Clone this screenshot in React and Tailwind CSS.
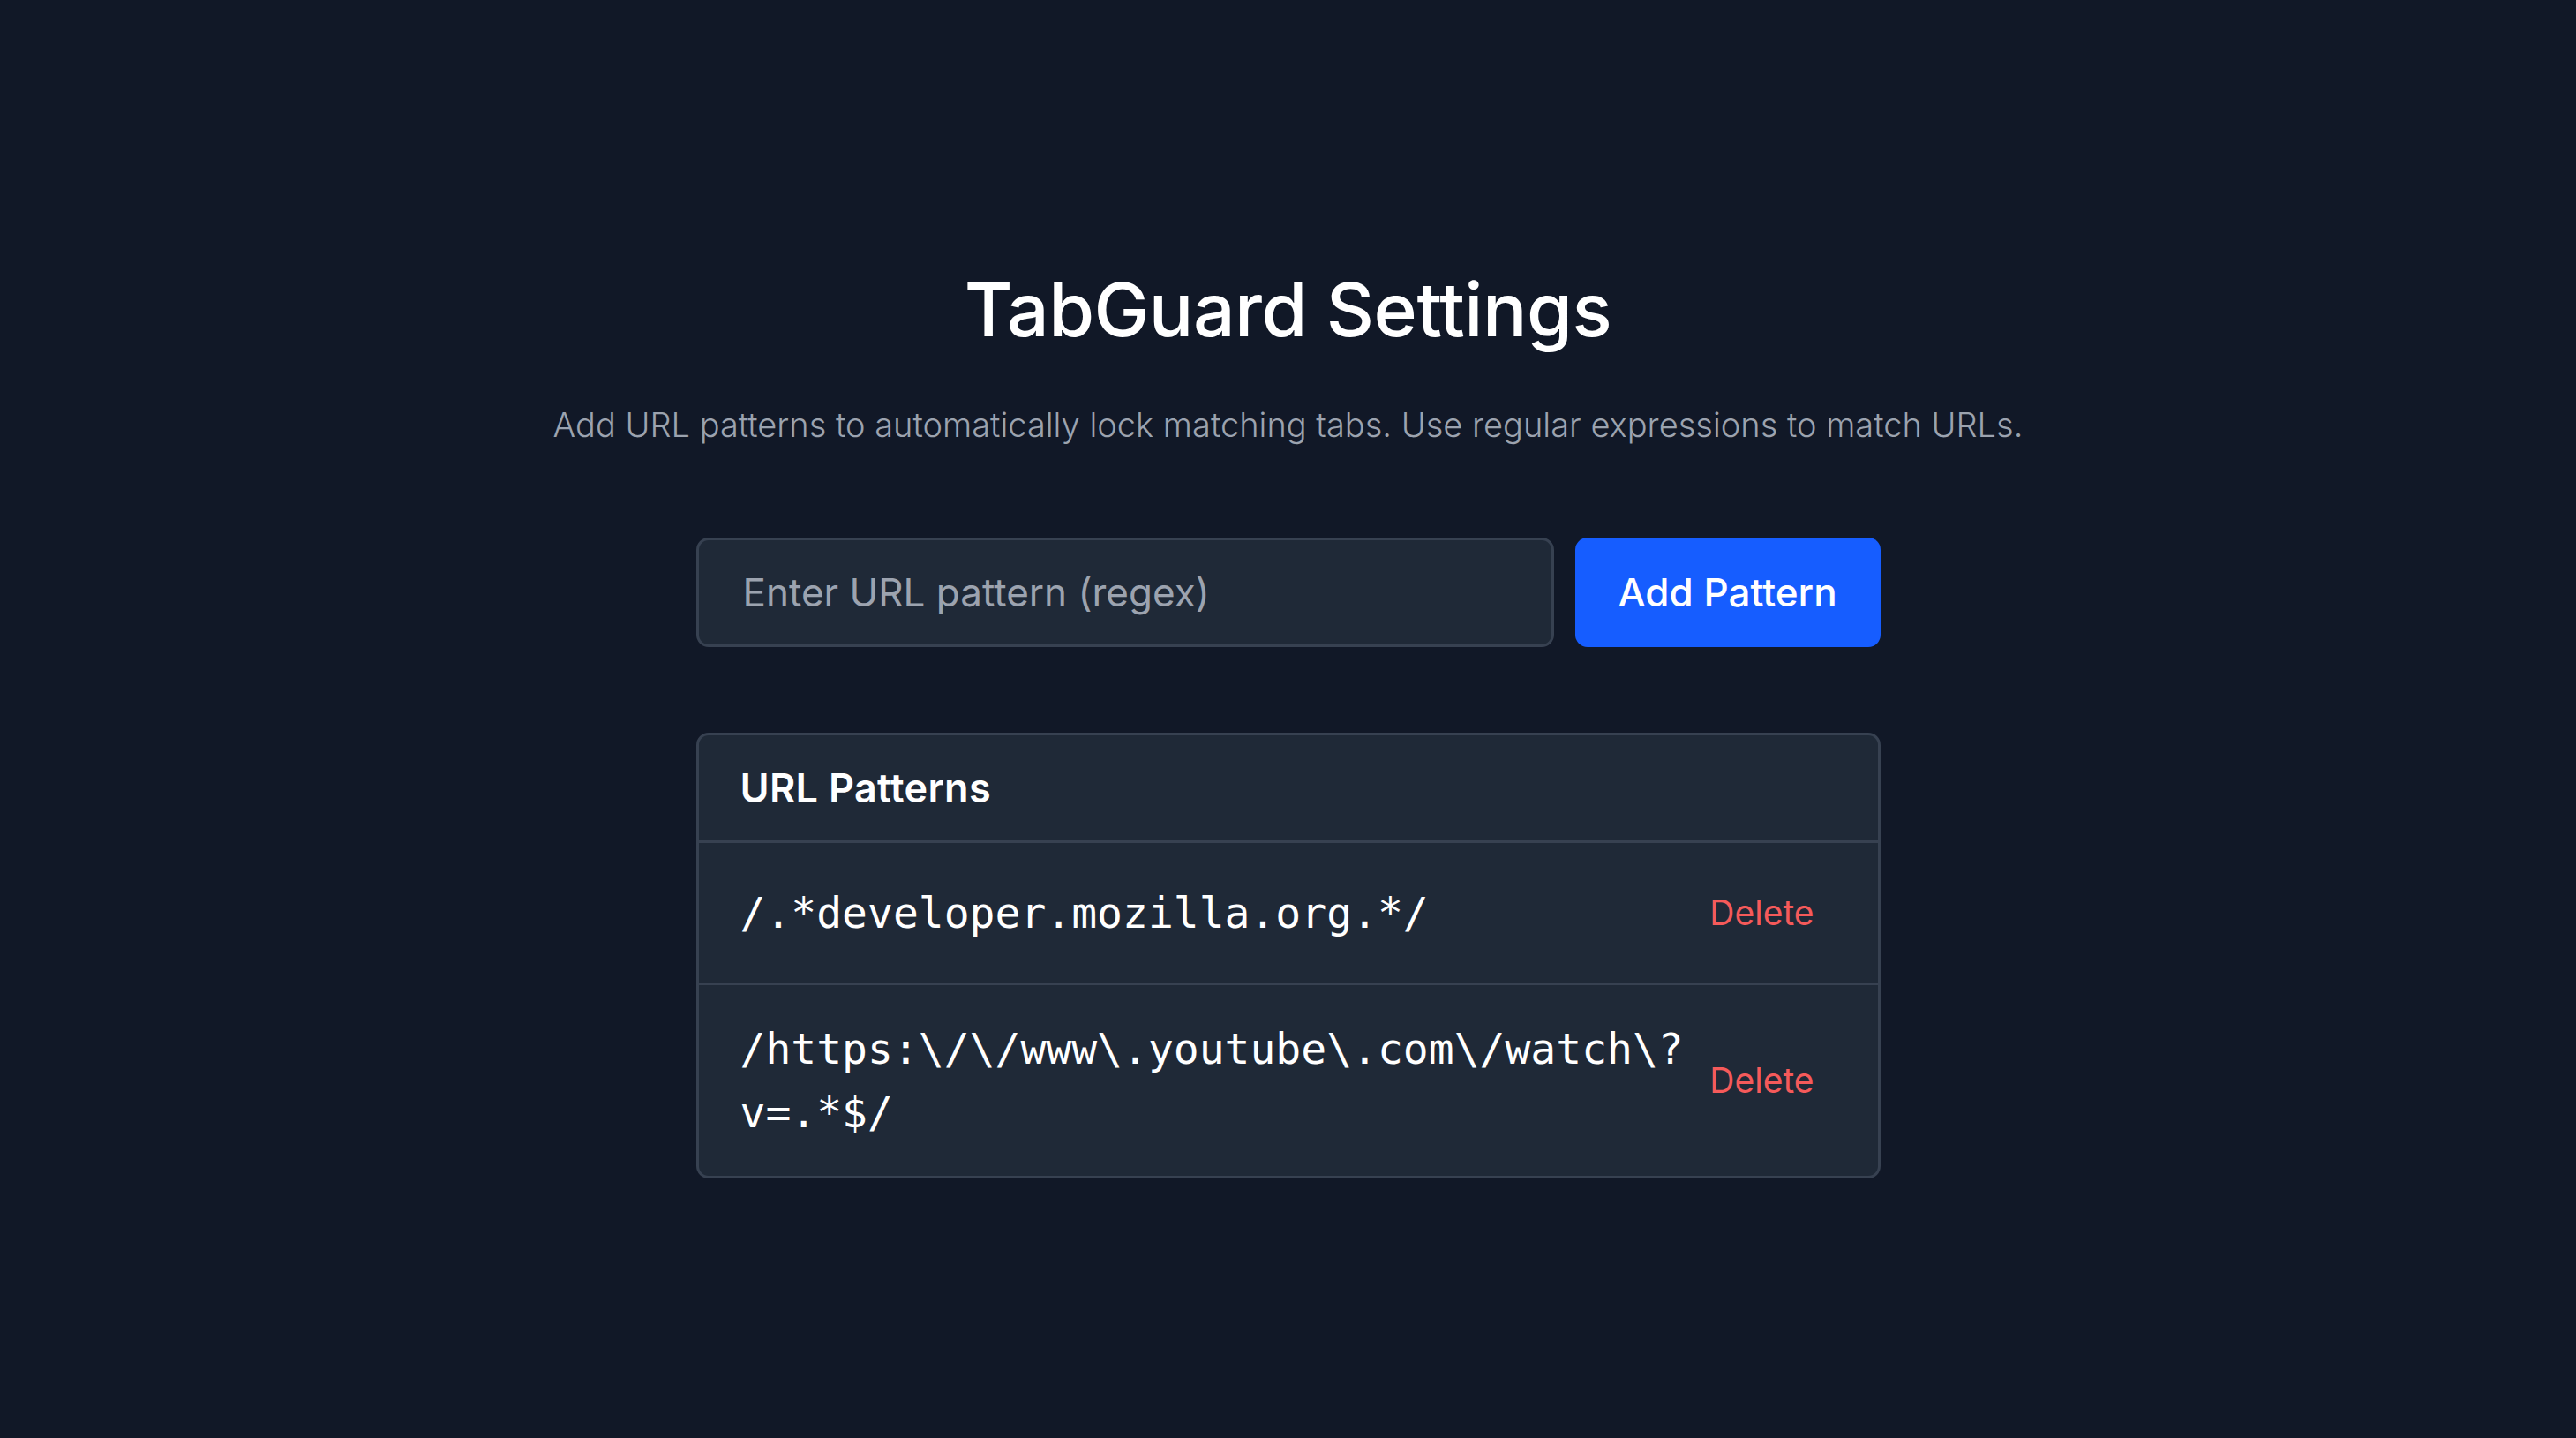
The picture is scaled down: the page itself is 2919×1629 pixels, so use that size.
export default function App() {
    const patterns = [
        '/.*developer.mozilla.org.*/',
        '/https:\\/\\/www\\.youtube\\.com\\/watch\\?v=.*$/',
    ];

    return (
        <div className="min-h-screen bg-[#111827] flex flex-col items-center pt-[300px] font-['Inter',sans-serif]">
            {/* Header */}
            <h1 className="text-[84px] leading-[101px] font-medium text-white tracking-[-0.5px]">TabGuard Settings</h1>
            <p className="mt-[52px] text-[38px] leading-[57px] text-[#9ca3af] font-light">
                Add URL patterns to automatically lock matching tabs. Use regular expressions to match URLs.
            </p>

            {/* Input row */}
            <div className="mt-[99px] w-[1342px] flex gap-[24px]">
                <input
                    type="text"
                    placeholder="Enter URL pattern (regex)"
                    className="flex-1 h-[124px] px-[50px] rounded-[14px] bg-[#1f2937] border-[3px] border-[#374151] text-[44px] text-white placeholder:text-[#9ca3af] outline-none"
                />
                <button className="h-[124px] w-[346px] rounded-[14px] bg-[#165dff] text-white text-[44px] font-medium">
                    Add Pattern
                </button>
            </div>

            {/* Pattern list */}
            <div className="mt-[97px] w-[1342px] rounded-[14px] bg-[#1f2937] border-[3px] border-[#374151] overflow-hidden">
                <div className="h-[122px] px-[47px] flex items-center border-b-[3px] border-[#374151]">
                    <h2 className="text-[45px] font-semibold text-white tracking-[0.3px]">URL Patterns</h2>
                </div>
                {patterns.map((p, i) => (
                    <div
                        key={i}
                        className={`flex items-center justify-between pl-[47px] pr-[48px] py-[36px] ${i < patterns.length - 1 ? 'border-b-[3px] border-[#374151]' : ''}`}
                    >
                        <span className="font-['DejaVu_Sans_Mono',monospace] text-[48px] leading-[72px] text-white break-all max-w-[1080px]">
                            {p}
                        </span>
                        <button className="px-[24px] py-[14px] text-[39px] leading-[58px] text-[#f55a5a]">Delete</button>
                    </div>
                ))}
            </div>
        </div>
    );
}
